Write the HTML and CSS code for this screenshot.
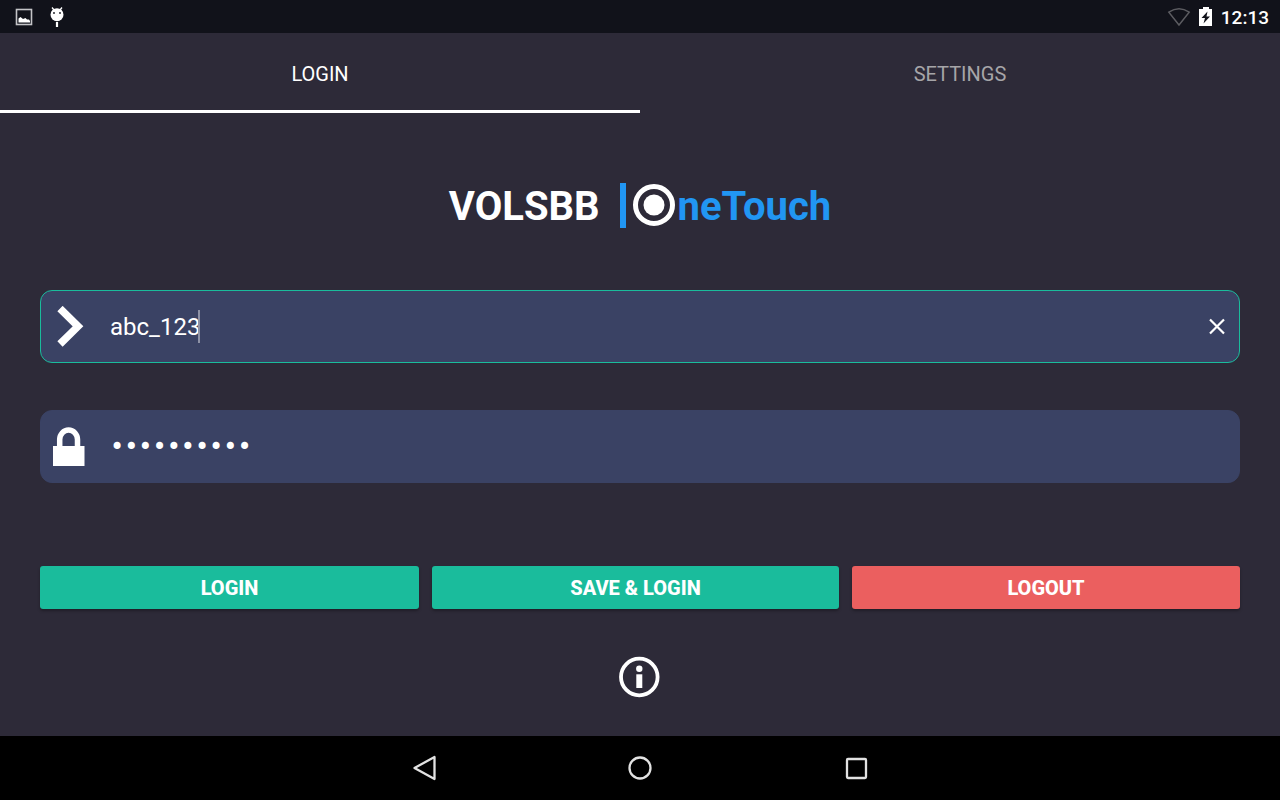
FILE: index.html
```html
<!DOCTYPE html>
<html lang="en">
<head>
<meta charset="utf-8">
<meta name="viewport" content="width=device-width, initial-scale=1">
<title>VOLSBB OneTouch</title>
<link rel="stylesheet" href="styles.css">
</head>
<body>
<header class="status">
  <div class="status-group notices">
    <svg width="18" height="18" viewBox="0 0 18 18" aria-hidden="true"><rect x="1.500" y="1.500" width="15" height="15" fill="none" stroke="#c4c4c7" stroke-width="1.600"/><path d="M3.500 14.500V10.500L5.500 9 8 11 10.500 10 12 11.500H14L15 13V14.500Z" fill="#fff"/></svg>
    <svg width="14" height="20" viewBox="0 0 14 20" aria-hidden="true"><path d="M2 .5 4 3M12 .5 10 3" stroke="#fff" stroke-width="1.300" fill="none"/><circle cx="7" cy="7.700" r="6.500" fill="#fff"/><circle cx="4" cy="6" r=".9" fill="#11121a"/><circle cx="10" cy="6" r=".9" fill="#11121a"/><path d="M7 15v5" stroke="#fff" stroke-width="2.200"/></svg>
  </div>
  <div class="status-group">
    <svg width="24" height="20" viewBox="0 0 24 20" aria-hidden="true"><path d="M1.800 5.200Q12-1.800 22.200 5.200L12 18Z" fill="none" stroke="#5c5c61" stroke-width="1.500"/></svg>
    <svg width="14" height="20" viewBox="0 0 14 20" aria-hidden="true"><path d="M4 0h6v2h3v17H0V2h4Z" fill="#fff"/><path d="M8.500 4.500 2.500 11H6L4.500 16.500 11 9.500H7.500Z" fill="#11121a"/></svg>
    <time class="clock">12:13</time>
  </div>
</header>

<nav class="tabs">
  <button class="tab active" type="button">LOGIN</button>
  <button class="tab" type="button">SETTINGS</button>
</nav>

<main class="main">
  <h1 class="brand">
    <span class="company">VOLSBB</span>
    <span class="product">
      <svg width="44" height="44" viewBox="0 0 44 44" role="img" aria-label="O"><circle cx="22" cy="21" r="18.500" fill="none" stroke="#fff" stroke-width="5"/><circle cx="22" cy="21" r="10.500" fill="#fff"/></svg><span class="wordmark">neTouch</span>
    </span>
  </h1>

  <form class="form">
    <div class="field focused">
      <svg class="field-icon" width="32" height="42" viewBox="0 0 32 42" aria-hidden="true"><path d="M7 2.500 25 20.300 7 38" fill="none" stroke="#fff" stroke-width="7.500"/></svg>
      <div class="entry">
        <input class="text user" type="text" value="abc_123" aria-label="User name">
        <span class="caret"></span>
      </div>
      <button class="clear" type="button" aria-label="Clear">
        <svg width="18" height="18" viewBox="0 0 18 18" aria-hidden="true"><path d="M2 1.500 16 15.500M16 1.500 2 15.500" stroke="#fff" stroke-width="2.200"/></svg>
      </button>
    </div>
    <div class="field">
      <svg class="field-icon" width="32" height="42" viewBox="0 0 32 42" aria-hidden="true"><path d="M6.700 21V13.500a8.900 9.500 0 0 1 17.800 0V21" fill="none" stroke="#fff" stroke-width="5.500"/><path d="M0 20h31.500v20H0Z" fill="#fff"/></svg>
      <input class="text secret" type="password" value="abcdefghij" aria-label="Password">
    </div>
    <div class="actions">
      <button class="action login" type="button">LOGIN</button>
      <button class="action save" type="button">SAVE &amp; LOGIN</button>
      <button class="action logout" type="button">LOGOUT</button>
    </div>
  </form>

  <button class="info" type="button" aria-label="Information">
    <svg width="42" height="42" viewBox="0 0 42 42" aria-hidden="true"><circle cx="20.300" cy="21" r="18.300" fill="none" stroke="#fff" stroke-width="3.800"/><circle cx="20.300" cy="12.800" r="3.200" fill="#fff"/><path d="M17.300 18.300h6v13.700h-6Z" fill="#fff"/></svg>
  </button>
</main>

<footer class="system">
  <button class="key" type="button" aria-label="Back"><svg width="26" height="28" viewBox="0 0 26 28" aria-hidden="true"><path d="M23.500 3v22L3.500 14Z" fill="none" stroke="#e2e2e2" stroke-width="2.300" stroke-linejoin="round"/></svg></button>
  <button class="key" type="button" aria-label="Home"><svg width="26" height="28" viewBox="0 0 26 28" aria-hidden="true"><circle cx="13" cy="14" r="10.500" fill="none" stroke="#e2e2e2" stroke-width="2.300"/></svg></button>
  <button class="key" type="button" aria-label="Recent apps"><svg width="26" height="28" viewBox="0 0 26 28" aria-hidden="true"><rect x="4" y="5" width="19" height="19" rx="1" fill="none" stroke="#e2e2e2" stroke-width="2.300"/></svg></button>
</footer>
</body>
</html>
```

FILE: styles.css
```css
* { box-sizing: border-box; }

body {
  margin: 0;
  min-height: 100vh;
  display: flex;
  flex-direction: column;
  background: #2d2a38;
  color: #fff;
  font-family: Roboto, "Noto Sans", sans-serif;
}

svg { display: block; flex: none; }

button {
  margin: 0;
  padding: 0;
  border: 0;
  background: none;
  color: inherit;
  font-family: inherit;
}

.status {
  display: flex;
  justify-content: space-between;
  align-items: center;
  height: 33px;
  padding: 0 11px 0 15px;
  background: #11121a;
}

.status-group { display: flex; align-items: center; gap: 8px; }
.notices { gap: 17px; }

.clock {
  padding-top: 2px;
  font-size: 19px;
  font-weight: 500;
  line-height: 31px;
}

.tabs { display: flex; }

.tab {
  flex: 1;
  height: 80px;
  padding-top: 4px;
  border-bottom: 3px solid transparent;
  color: #a6a5a8;
  font-size: 20px;
}

.tab.active { border-color: #fff; color: #fff; }

.main {
  flex: 1;
  display: flex;
  flex-direction: column;
  align-items: center;
  padding: 70px 40px 38px;
}

.brand {
  display: flex;
  align-items: center;
  gap: 20px;
  margin: 0;
  font-size: 40px;
  font-weight: 700;
  line-height: 43px;
}

.company,
.wordmark { padding-top: 2px; }

.product {
  display: flex;
  align-items: center;
  gap: 2px;
  padding-left: 6px;
  border-left: 6px solid #2196f3;
  color: #2196f3;
}

.form { width: 100%; margin-top: 62px; }

.field {
  display: flex;
  align-items: center;
  height: 73px;
  padding: 0 12px;
  border: 1px solid #3a4264;
  border-radius: 12px;
  background: #3a4264;
}

.field + .field { margin-top: 47px; }
.focused { border-color: #1abc9c; }

.entry { flex: 1; display: flex; align-items: center; }

.text {
  margin: 0 0 0 25px;
  padding: 2px 0 0;
  border: 0;
  outline: 0;
  background: none;
  color: #fff;
  font-family: inherit;
  font-size: 24px;
  line-height: 31px;
}

.user { field-sizing: content; }

.secret {
  flex: 1;
  font-family: "DejaVu Sans", sans-serif;
}

.caret { width: 2px; height: 33px; margin-left: -2px; background: #8e92a6; }

.clear { padding: 1px; }

.actions { display: flex; gap: 13px; margin-top: 83px; }

.action {
  flex: 1 1 0;
  height: 43px;
  border-radius: 3px;
  background: #1abc9c;
  box-shadow: 0 2px 3px rgba(0, 0, 0, .3);
  font-size: 20px;
  font-weight: 800;
}

.login { flex-grow: 379; }
.save { flex-grow: 407; }
.logout { flex-grow: 388; background: #eb5f5f; }

.info { margin-top: 47px; }

.system {
  display: flex;
  justify-content: center;
  align-items: center;
  gap: 190px;
  height: 64px;
  background: #000;
}
```
